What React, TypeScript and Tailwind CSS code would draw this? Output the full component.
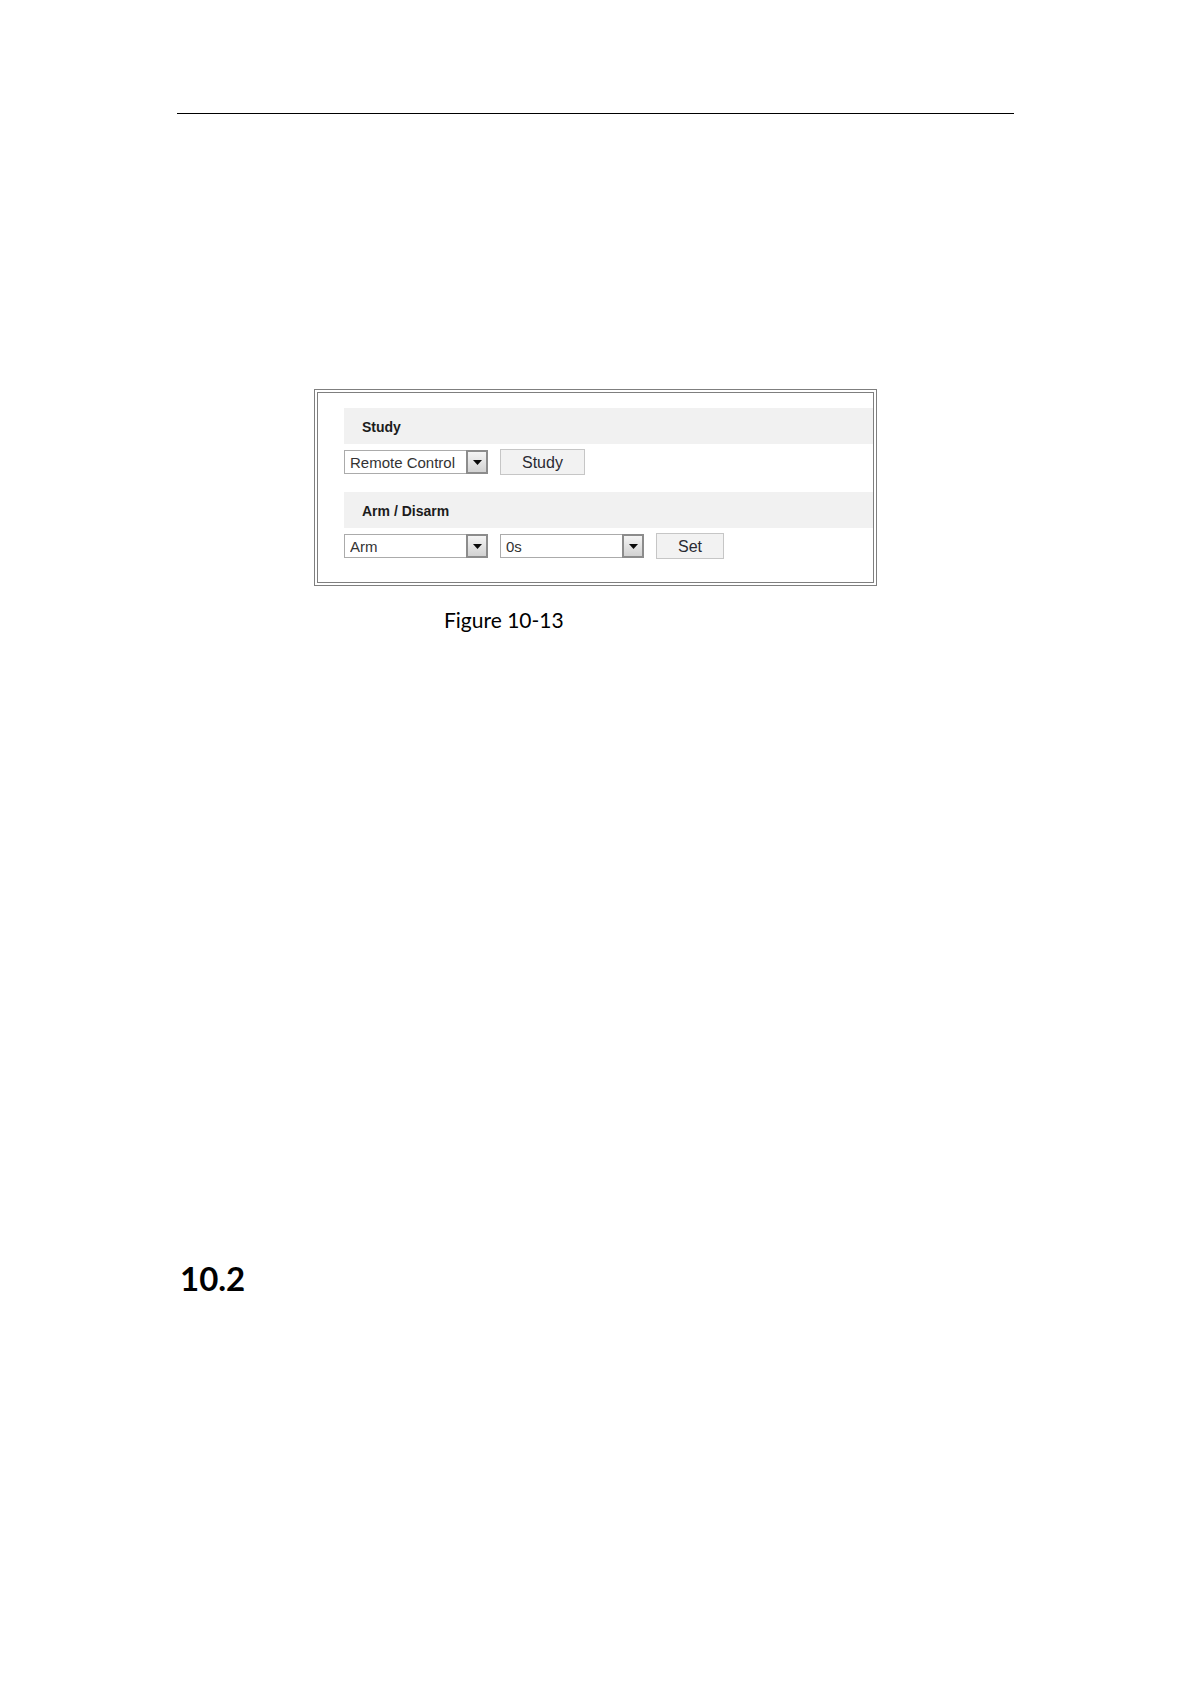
import { useState } from 'react';

interface SelectBoxProps {
  label: string;
  options: string[];
  value: string;
  onChange: (value: string) => void;
}

function SelectBox({ label, options, value, onChange }: SelectBoxProps) {
  return (
    <div className="relative w-36 h-6">
      <select
        aria-label={label}
        value={value}
        onChange={e => onChange(e.target.value)}
        className="block w-full h-full appearance-none border border-[#ababab] bg-white pt-0.5 pl-[5px] pr-6 text-[15px] leading-5 text-[#333]"
      >
        {options.map(option => (
          <option key={option} value={option}>{option}</option>
        ))}
      </select>
      {/* Drop-down arrow over the right end of the box */}
      <span className="pointer-events-none absolute inset-y-0 right-0 w-[22px] border-2 border-[#8c8c8c] bg-linear-to-b from-[#f4f4f4] to-[#d2d2d2] flex items-center justify-center">
        <svg width="9" height="5" viewBox="0 0 9 5" aria-hidden="true">
          <path d="M0 0H9L4.5 5Z" fill="#0a0a0a" />
        </svg>
      </span>
    </div>
  );
}

function SectionTitle({ children }: { children: string }) {
  return (
    <h3 className="h-9 bg-[#f1f1f1] pl-[18px] text-[14px] leading-[38px] font-bold text-[#1c1c1c]">
      {children}
    </h3>
  );
}

function PushButton({ children }: { children: string }) {
  return (
    <button
      type="button"
      className="h-[26px] border border-[#c6c6c6] bg-[#f2f2f2] px-[21px] pt-0.5 text-[16px] leading-[22px] text-[#2a2a33]"
    >
      {children}
    </button>
  );
}

export default function App() {
  const [device, setDevice] = useState('Remote Control');
  const [mode, setMode] = useState('Arm');
  const [delay, setDelay] = useState('0s');

  return (
    <main className="min-h-screen bg-white pl-[177px] pr-44 pt-[113px] pb-20 text-black">
      <hr className="border-t border-black" />

      <figure className="mx-auto mt-[275px] max-w-[563px]">
        <div className="border-4 border-double border-[#7f7f7f] pt-[15px] pb-[23px] pl-[26px] font-['Liberation_Sans',Arial,sans-serif]">
          <section>
            <SectionTitle>Study</SectionTitle>
            <div className="mt-[5px] flex items-center gap-3">
              <SelectBox
                label="Device type"
                options={['Remote Control', 'Detector']}
                value={device}
                onChange={setDevice}
              />
              <PushButton>Study</PushButton>
            </div>
          </section>

          <section className="mt-[17px]">
            <SectionTitle>Arm / Disarm</SectionTitle>
            <div className="mt-[5px] flex items-center gap-3">
              <SelectBox
                label="Mode"
                options={['Arm', 'Disarm']}
                value={mode}
                onChange={setMode}
              />
              <SelectBox
                label="Delay"
                options={['0s', '15s', '30s', '60s']}
                value={delay}
                onChange={setDelay}
              />
              <PushButton>Set</PushButton>
            </div>
          </section>
        </div>
        <figcaption className="mt-[22px] pl-[130px] font-[Lato,sans-serif] text-[21px] leading-6">
          Figure 10-13
        </figcaption>
      </figure>

      <h2 className="mt-[626px] pl-[3px] font-[Lato,sans-serif] text-[33px] leading-10 font-bold">10.2</h2>
    </main>
  );
}
